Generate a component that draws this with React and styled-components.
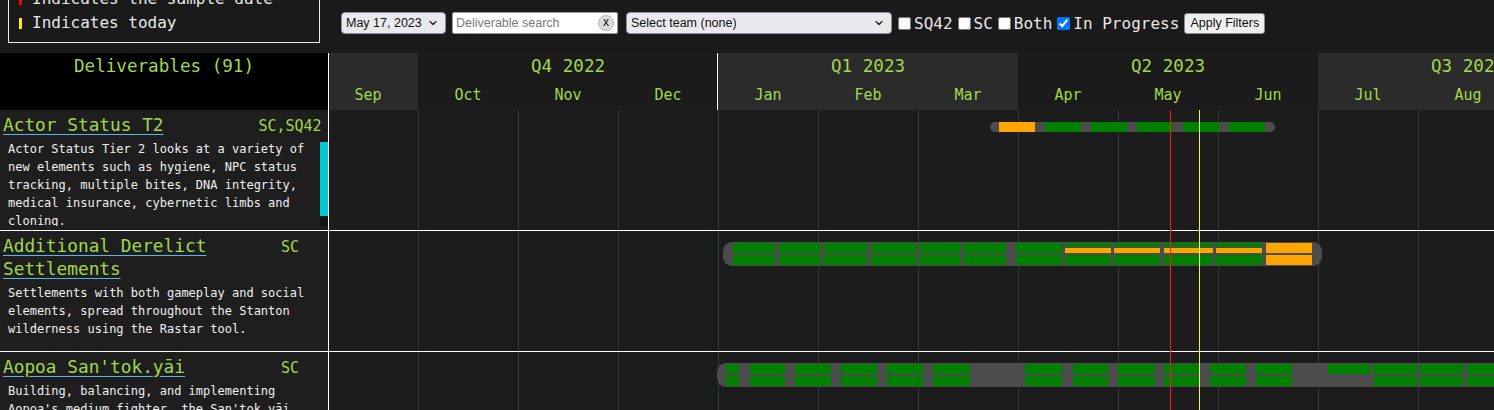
import styled, { createGlobalStyle } from "styled-components";
import { ChevronDown } from "lucide-react";

const GREEN = "#a2d84e";
const MONTH_W = 100;
// track starts at Jul 2022 and is scrolled so that Sep sits under the left column edge
const TRACK_SCROLL = 211;

const GlobalStyle = createGlobalStyle`
  html, body {
    margin: 0;
    padding: 0;
    background: #1c1c1c;
    overflow: hidden;
  }
  body {
    font-family: "DejaVu Sans Mono", monospace;
  }
`;

const quarters = [
  { label: "Q3 2022", months: ["Jul", "Aug", "Sep"], light: true },
  { label: "Q4 2022", months: ["Oct", "Nov", "Dec"], yearEnd: true },
  { label: "Q1 2023", months: ["Jan", "Feb", "Mar"], light: true },
  { label: "Q2 2023", months: ["Apr", "May", "Jun"] },
  { label: "Q3 2023", months: ["Jul", "Aug", "Sep"], light: true },
];

const step = (start, width, gap, n, color) =>
  Array.from({ length: n }, (_, i) => ({
    from: start + i * (width + gap),
    to: start + i * (width + gap) + width,
    top: typeof color === "function" ? color(i) : color,
  }));

const deliverables = [
  {
    title: "Actor Status T2",
    tag: "SC,SQ42",
    scrolls: true,
    desc:
      "Actor Status Tier 2 looks at a variety of new elements such as hygiene, NPC status tracking, multiple bites, DNA integrity, medical insurance, cybernetic limbs and cloning.",
    bar: {
      left: 872,
      width: 285,
      top: 12,
      lanes: 1,
      segments: step(9, 36, 10, 6, (i) => (i === 0 ? "o" : "g")),
    },
  },
  {
    title: "Additional Derelict Settlements",
    tag: "SC",
    desc:
      "Settlements with both gameplay and social elements, spread throughout the Stanton wilderness using the Rastar tool.",
    bar: {
      left: 605,
      width: 599,
      top: 11,
      lanes: 2,
      segments: [
        [10, 52, "g", "g"],
        [56, 98, "g", "g"],
        [101, 144, "g", "g"],
        [148, 194, "g", "g"],
        [197, 237, "g", "g"],
        [240, 283, "g", "g"],
        [293, 339, "g", "g"],
        [342, 388, "split", "g"],
        [391, 437, "split", "g"],
        [441, 490, "split", "g"],
        [493, 539, "split", "g"],
        [543, 589, "o", "o"],
      ].map(([from, to, top, bottom]) => ({ from, to, top, bottom })),
    },
  },
  {
    title: "Aopoa San'tok.yāi",
    tag: "SC",
    desc:
      "Building, balancing, and implementing Aopoa's medium fighter, the San'tok.yāi.",
    bar: {
      left: 599,
      width: 1000,
      top: 11,
      lanes: 2,
      segments: [
        [9, 22, "g", "g"],
        [33, 68, "g", "g"],
        [78, 114, "g", "g"],
        [124, 160, "g", "g"],
        [170, 206, "g", "g"],
        [216, 253, "g", "g"],
        [308, 345, "g", "g"],
        [356, 391, "g", "g"],
        [401, 438, "g", "g"],
        [447, 483, "g", "g"],
        [493, 529, "g", "g"],
        [539, 575, "g", "g"],
        [611, 654, "g", null],
        [657, 700, "g", "g"],
        [703, 746, "g", "g"],
        [750, 793, "g", "g"],
        [796, 839, "g", "g"],
      ].map(([from, to, top, bottom]) => ({ from, to, top, bottom })),
    },
  },
];

function dateX(year, month, day) {
  const idx = (year - 2022) * 12 + (month - 1) - 6;
  const days = new Date(year, month, 0).getDate();
  return Math.round(idx * MONTH_W + ((day - 1) / days) * MONTH_W);
}

const SEG_COLORS = { g: "#008000", o: "#ffa500" };

function BarSegments({ bar }) {
  const lanes = bar.lanes === 1 ? [{ top: 0, h: 10 }] : [{ top: 1, h: 10 }, { top: 13, h: 10 }];
  const pieces = [];
  bar.segments.forEach((s, i) => {
    [s.top, s.bottom].forEach((kind, li) => {
      const lane = lanes[li];
      if (!kind || !lane) return;
      const base = { left: s.from, width: s.to - s.from };
      if (kind === "split") {
        pieces.push(<Segment key={`${i}-${li}-a`} $kind="g" style={{ ...base, top: lane.top, height: 4 }} />);
        pieces.push(<Segment key={`${i}-${li}-b`} $kind="o" style={{ ...base, top: lane.top + 5, height: 5 }} />);
      } else {
        pieces.push(<Segment key={`${i}-${li}`} $kind={kind} style={{ ...base, top: lane.top, height: lane.h }} />);
      }
    });
  });
  return pieces;
}

export default function App() {
  const sampleX = dateX(2023, 5, 17);
  const todayX = dateX(2023, 5, 26);

  return (
    <Page>
      <GlobalStyle />
      <TopBar>
        <Legend>
          <LegendItem>
            <LegendMark $color="#ff0000" />
            Indicates the sample date
          </LegendItem>
          <LegendItem>
            <LegendMark $color="#ffee00" />
            Indicates today
          </LegendItem>
        </Legend>
        <Filters>
          <SelectBox $width={105}>
            <NativeSelect defaultValue="2023-05-17">
              <option value="2023-05-17">May 17, 2023</option>
            </NativeSelect>
            <ChevronDown size={12} strokeWidth={2.5} color="#222" />
          </SelectBox>
          <SearchBox>
            <SearchInput placeholder="Deliverable search" />
            <ClearButton>x</ClearButton>
          </SearchBox>
          <SelectBox $width={266}>
            <NativeSelect defaultValue="">
              <option value="">Select team (none)</option>
            </NativeSelect>
            <ChevronDown size={12} strokeWidth={2.5} color="#222" />
          </SelectBox>
          <Check type="checkbox" $first />
          <CheckLabel>SQ42</CheckLabel>
          <Check type="checkbox" />
          <CheckLabel>SC</CheckLabel>
          <Check type="checkbox" />
          <CheckLabel>Both</CheckLabel>
          <Check type="checkbox" defaultChecked />
          <CheckLabel>In Progress</CheckLabel>
          <ApplyButton>Apply Filters</ApplyButton>
        </Filters>
      </TopBar>

      <Board>
        <LeftColumn>
          <LeftHeader>Deliverables (91)</LeftHeader>
          {deliverables.map((d) => (
            <Cell key={d.title}>
              <TitleRow>
                <Title href="#">{d.title}</Title>
                <Tag>{d.tag}</Tag>
              </TitleRow>
              <DescWrap>
                <DescText>{d.desc}</DescText>
                {d.scrolls && (
                  <ScrollTrack>
                    <ScrollThumb />
                  </ScrollTrack>
                )}
              </DescWrap>
            </Cell>
          ))}
        </LeftColumn>

        <TimelinePane>
          <Track>
            <TrackHeader>
              {quarters.map((q) => (
                <Quarter key={q.label} $light={q.light} $yearEnd={q.yearEnd}>
                  <QuarterLabel>{q.label}</QuarterLabel>
                  <MonthRow>
                    {q.months.map((m) => (
                      <Month key={m}>{m}</Month>
                    ))}
                  </MonthRow>
                </Quarter>
              ))}
            </TrackHeader>
            <TrackBody>
              {deliverables.map((d) => (
                <TrackRow key={d.title}>
                  <Bar
                    $radius={d.bar.lanes === 1 ? 5 : 9}
                    style={{
                      left: d.bar.left,
                      width: d.bar.width,
                      top: d.bar.top,
                      height: d.bar.lanes === 1 ? 10 : 24,
                    }}
                  >
                    <BarSegments bar={d.bar} />
                  </Bar>
                </TrackRow>
              ))}
              <MarkerLine $color="#ff1a1a" style={{ left: sampleX }} />
              <MarkerLine $color="#f4f06a" style={{ left: todayX }} />
            </TrackBody>
          </Track>
        </TimelinePane>
      </Board>
    </Page>
  );
}

const Page = styled.div`
  width: 100%;
  height: 410px;
  overflow: hidden;
  background: #1c1c1c;
`;

const TopBar = styled.div`
  height: 53px;
  background: #1a1a1a;
  display: flex;
  align-items: flex-start;
`;

const Legend = styled.div`
  box-sizing: border-box;
  width: 312px;
  margin: -20px 0 0 8px;
  padding: 6px 10px 7px;
  border: 1px solid #e8e8e8;
  color: #e8e8e8;
  font-size: 16px;
  line-height: 24px;
`;

const LegendItem = styled.div`
  display: flex;
  align-items: center;
  white-space: nowrap;
`;

const LegendMark = styled.span`
  display: inline-block;
  width: 3px;
  height: 11px;
  margin-right: 10px;
  background: ${(p) => p.$color};
`;

const Filters = styled.div`
  display: flex;
  align-items: center;
  height: 22px;
  margin: 12px 0 0 21px;
`;

const SelectBox = styled.label`
  box-sizing: border-box;
  display: flex;
  align-items: center;
  width: ${(p) => p.$width}px;
  height: 22px;
  padding-right: 6px;
  margin-right: ${(p) => (p.$width > 200 ? 0 : 6)}px;
  background: #e9e9ed;
  border: 1px solid #8f8f9d;
  border-radius: 4px;
`;

const NativeSelect = styled.select`
  appearance: none;
  flex: 1;
  min-width: 0;
  border: none;
  outline: none;
  background: transparent;
  padding: 0 4px;
  font-family: "Liberation Sans", Arial, sans-serif;
  font-size: 12.5px;
  color: #111;
`;

const SearchBox = styled.label`
  box-sizing: border-box;
  display: flex;
  align-items: center;
  width: 166px;
  height: 22px;
  margin-right: 8px;
  background: #fff;
  border: 1px solid #9a9a9a;
  border-radius: 2px;
`;

const SearchInput = styled.input`
  flex: 1;
  min-width: 0;
  border: none;
  outline: none;
  background: transparent;
  padding: 0 3px;
  font-family: "Liberation Sans", Arial, sans-serif;
  font-size: 12.5px;
  color: #111;

  &::placeholder {
    color: #7a7a7a;
  }
`;

const ClearButton = styled.button`
  box-sizing: border-box;
  width: 16px;
  height: 16px;
  margin-right: 3px;
  padding: 0 0 2px;
  border: 1px solid #b5b5b5;
  border-radius: 50%;
  background: #dcdcdc;
  font-family: "Liberation Sans", Arial, sans-serif;
  font-size: 12px;
  line-height: 12px;
  color: #111;
`;

const Check = styled.input`
  width: 13px;
  height: 13px;
  margin: 0 3px 0 ${(p) => (p.$first ? 6 : 5)}px;
  accent-color: #0075ff;
`;

const CheckLabel = styled.span`
  color: #e6e6e6;
  font-size: 16px;
  white-space: nowrap;
`;

const ApplyButton = styled.button`
  box-sizing: border-box;
  width: 81px;
  height: 21px;
  margin-left: 5px;
  padding: 0;
  background: #efefef;
  border: 1px solid #8a8a8a;
  border-radius: 3px;
  font-family: "Liberation Sans", Arial, sans-serif;
  font-size: 12.5px;
  color: #111;
`;

const Board = styled.div`
  display: flex;
`;

const LeftColumn = styled.div`
  box-sizing: border-box;
  width: 329px;
  flex: none;
  border-right: 1px solid #fff;
  background: #1e1e1e;
`;

const LeftHeader = styled.div`
  height: 57px;
  background: #000;
  color: ${GREEN};
  font-size: 17.6px;
  line-height: 27px;
  text-align: center;
`;

const Cell = styled.div`
  box-sizing: border-box;
  height: 121px;
  border-bottom: 1px solid #fff;
  display: flex;
  flex-direction: column;
  padding: 2.5px 0 4px;
`;

const TitleRow = styled.div`
  display: flex;
  align-items: baseline;
  padding: 0 6px 0 3px;
`;

const Title = styled.a`
  flex: 1;
  color: ${GREEN};
  font-size: 17.8px;
  line-height: 23px;
  text-decoration: underline;
  text-decoration-color: #5ab4e6;
  text-underline-offset: 3px;
`;

const Tag = styled.span`
  flex: none;
  width: 64px;
  text-align: center;
  color: ${GREEN};
  font-size: 15px;
`;

const DescWrap = styled.div`
  flex: 1;
  min-height: 0;
  margin-top: 4px;
  display: flex;
`;

const DescText = styled.div`
  flex: 1;
  min-width: 0;
  overflow: hidden;
  padding-left: 8px;
  color: #efefef;
  font-size: 12px;
  line-height: 18px;
`;

const ScrollTrack = styled.div`
  flex: none;
  width: 8px;
  padding-top: 2px;
  background: #141414;
  display: flex;
  flex-direction: column;
`;

const ScrollThumb = styled.div`
  height: 74px;
  background: #00c8d2;
`;

const TimelinePane = styled.div`
  flex: 1;
  min-width: 0;
  overflow: hidden;
`;

const Track = styled.div`
  width: 1500px;
  margin-left: -${TRACK_SCROLL}px;
`;

const TrackHeader = styled.div`
  display: flex;
  height: 57px;
`;

const Quarter = styled.div`
  width: 300px;
  display: flex;
  flex-direction: column;
  background: ${(p) => (p.$light ? "#2b2b2b" : "#1b1b1b")};
  box-shadow: ${(p) => (p.$yearEnd ? "inset -1px 0 0 #fff" : "none")};
`;

const QuarterLabel = styled.div`
  height: 27px;
  line-height: 27px;
  text-align: center;
  color: ${GREEN};
  font-size: 17.6px;
`;

const MonthRow = styled.div`
  display: flex;
`;

const Month = styled.div`
  width: ${MONTH_W}px;
  height: 30px;
  line-height: 30px;
  text-align: center;
  color: ${GREEN};
  font-size: 15px;
`;

const TrackBody = styled.div`
  position: relative;
  background-color: #1c1c1c;
  background-image: repeating-linear-gradient(
    to right,
    #2c3a38 0 1px,
    transparent 1px ${MONTH_W}px
  );
`;

const TrackRow = styled.div`
  box-sizing: border-box;
  position: relative;
  height: 121px;
  border-bottom: 1px solid #fff;
`;

const Bar = styled.div`
  position: absolute;
  background: #4c4c4c;
  border-radius: ${(p) => p.$radius}px;
  overflow: hidden;
`;

const Segment = styled.div`
  position: absolute;
  background: ${(p) => SEG_COLORS[p.$kind]};
`;

const MarkerLine = styled.div`
  position: absolute;
  top: 0;
  bottom: 0;
  width: 1px;
  background: ${(p) => p.$color};
  z-index: 2;
`;
